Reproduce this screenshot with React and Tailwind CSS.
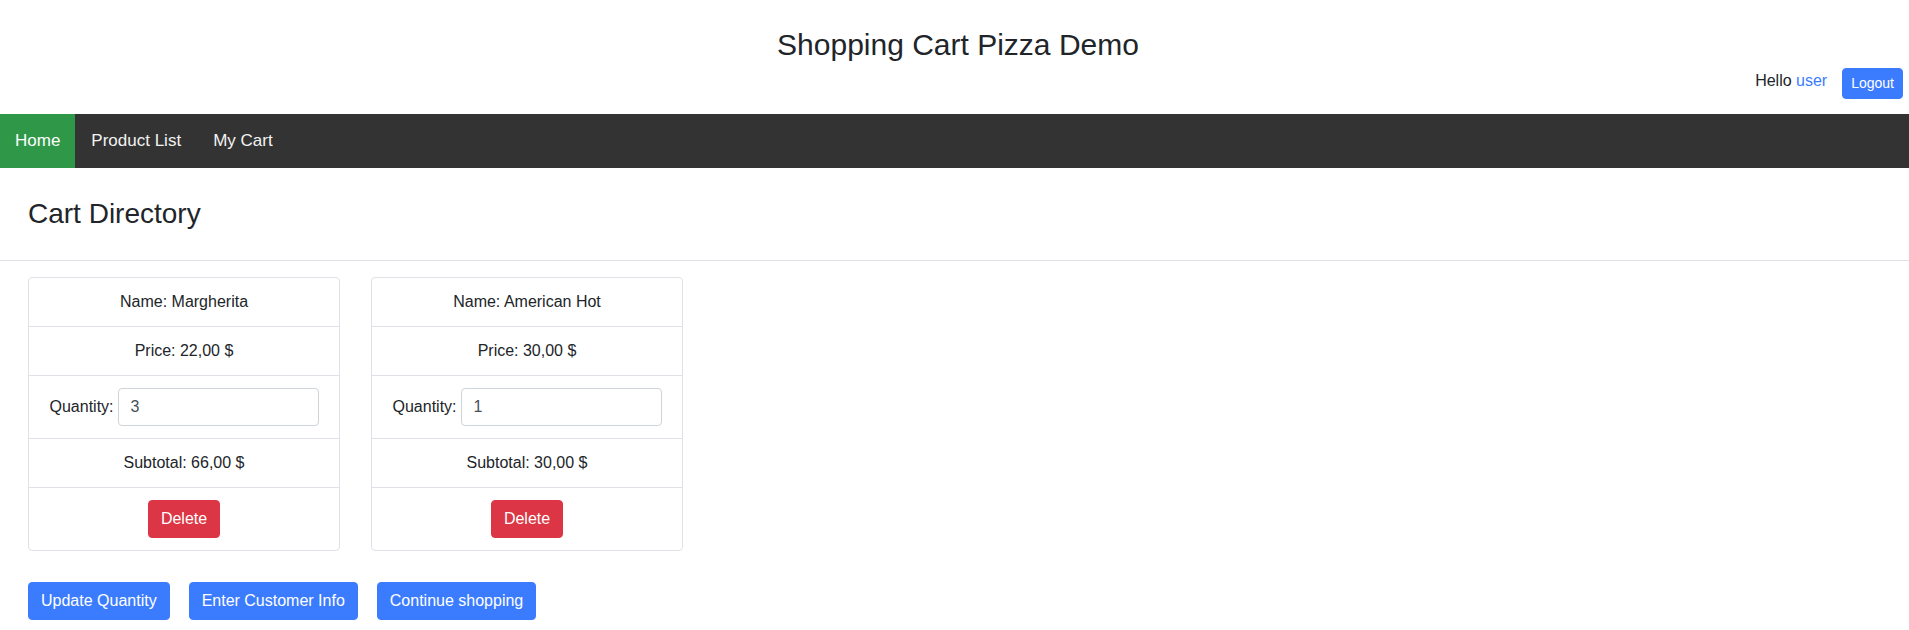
import { useState } from "react";

const NavLinks = [
  { name: "Home", active: true },
  { name: "Product List" },
  { name: "My Cart" },
];

const initialItems = [
  { name: "Margherita", price: 22, qty: 3 },
  { name: "American Hot", price: 30, qty: 1 },
];

const money = (n) => n.toFixed(2).replace(".", ",") + " $";

const CartCard = ({ item, onQty }) => {
  return (
    <div className="w-[312px] border border-[#dee2e6] rounded divide-y divide-[#dee2e6] text-center">
      <div className="py-3 leading-6">Name: {item.name}</div>
      <div className="py-3 leading-6">Price: {money(item.price)}</div>
      <div className="py-3 flex items-center justify-center">
        <span className="leading-6">Quantity:</span>
        <input
          className="ml-1 w-[201px] h-[38px] border border-[#ced4da] rounded px-3 text-[#495057] outline-none"
          value={item.qty}
          onChange={(e) => onQty(e.target.value)}
        />
      </div>
      <div className="py-3 leading-6">Subtotal: {money(item.price * (Number(item.qty) || 0))}</div>
      <div className="py-3 flex justify-center">
        <button className="bg-[#dc3545] border border-[#dc3545] text-white px-3 py-1.5 leading-6 rounded">
          Delete
        </button>
      </div>
    </div>
  );
};

const App = () => {
  const [items, setItems] = useState(initialItems);

  return (
    <div className="min-h-[630px] bg-white text-[#212529] text-base font-['Liberation_Sans',Arial,sans-serif]">
      {/* header */}
      <div className="pt-[27px] pb-[15px]">
        <h1 className="text-[30px] leading-[36px] text-center font-normal pl-[7px]">Shopping Cart Pizza Demo</h1>
        <div className="flex justify-end items-start gap-[15px] pr-[6px] mt-[5px]">
          <span className="leading-6 pt-px">
            Hello <a className="text-[#3b7cff] cursor-pointer">user</a>
          </span>
          <button className="bg-[#3b7cff] border border-[#3b7cff] text-white text-sm leading-[21px] px-2 py-1 rounded">
            Logout
          </button>
        </div>
      </div>

      {/* nav */}
      <nav className="bg-[#333333] flex">
        {NavLinks.map((link, index) => (
          <a
            key={index}
            className={
              link.active
                ? "bg-[#2e9748] text-white px-[15px] py-[14px] text-[17px] leading-[1.5] cursor-pointer"
                : "text-[#f2f2f2] px-4 py-[14px] text-[17px] leading-[1.5] cursor-pointer"
            }
          >
            {link.name}
          </a>
        ))}
      </nav>

      <div className="px-[28px]">
        <h3 className="text-[28px] leading-[1.2] font-normal pt-[29px] pb-[30px]">Cart Directory</h3>
      </div>
      <div className="border-t border-[#dee2e6]"></div>

      {/* cart cards */}
      <div className="px-[28px] pt-4 flex gap-[31px]">
        {items.map((item, index) => (
          <CartCard
            key={index}
            item={item}
            onQty={(v) =>
              setItems(items.map((it, i) => (i === index ? { ...it, qty: v } : it)))
            }
          />
        ))}
      </div>

      {/* actions */}
      <div className="px-[28px] mt-[31px] flex gap-[19px]">
        {["Update Quantity", "Enter Customer Info", "Continue shopping"].map((label) => (
          <button
            key={label}
            className="bg-[#3b7cff] border border-[#3b7cff] text-white px-3 py-1.5 leading-6 rounded"
          >
            {label}
          </button>
        ))}
      </div>
    </div>
  );
};

export default App;
